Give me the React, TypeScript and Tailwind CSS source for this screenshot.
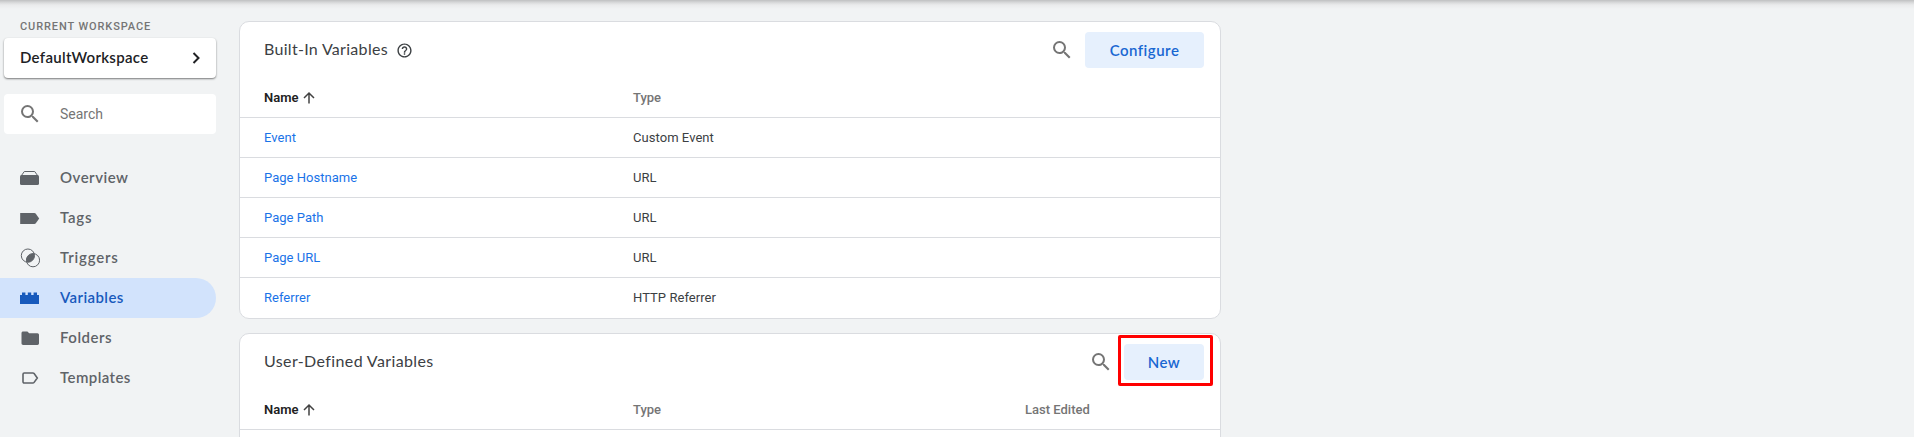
import type { ReactNode } from "react";

const HEADING = "font-['Lato','Open_Sans',sans-serif]";

function SearchIcon() {
  return (
    <svg viewBox="0 0 24 24" className="size-6 shrink-0 fill-[#757575]">
      <path d="M15.5 14h-.79l-.28-.27A6.47 6.47 0 0 0 16 9.5 6.5 6.5 0 1 0 9.5 16c1.61 0 3.09-.59 4.23-1.57l.27.28v.79l5 4.99L20.49 19l-4.99-5zm-6 0C7.01 14 5 11.99 5 9.5S7.01 5 9.5 5 14 7.01 14 9.5 11.99 14 9.5 14z" />
    </svg>
  );
}

type NavItem = { label: string; tracking: string; icon: ReactNode; active?: boolean };

const nav: NavItem[] = [
  {
    label: "Overview",
    tracking: "tracking-[0.5px]",
    icon: (
      <>
        <path d="M4.3 3.5h10.400l3 4.2H1.300z" fill="none" stroke="currentColor" strokeWidth="1" />
        <rect x="0" y="7" width="19" height="10" rx="1.6" />
      </>
    ),
  },
  {
    label: "Tags",
    tracking: "tracking-[0.75px]",
    icon: <path d="M.2 5h14.2c.6 0 1 .2 1.4.7l3.4 4.8-3.4 4.8c-.4.5-.8.7-1.4.7H.2z" />,
  },
  {
    label: "Triggers",
    tracking: "tracking-[0.8px]",
    icon: (
      <>
        <circle cx="7.9" cy="7.6" r="6.6" fill="none" stroke="currentColor" />
        <circle cx="13" cy="12.2" r="6.6" fill="none" stroke="currentColor" />
        <path d="M6.66 14.1A6.5 6.5 0 0 1 14.14 5.7A6.5 6.5 0 0 1 6.66 14.1z" />
      </>
    ),
  },
  {
    label: "Variables",
    tracking: "tracking-[0.4px]",
    active: true,
    icon: <path d="M0 16V7h2V4.5h3.4V7h2.4V4.5h3.4V7h2.4V4.500h3.400V7H19v9z" />,
  },
  {
    label: "Folders",
    tracking: "tracking-[0.5px]",
    icon: <path d="M3.2 3.400h4.200l1.800 1.800h8.200c1 0 1.600.800 1.600 1.700v8.400c0 1-.700 1.700-1.600 1.700H3.200c-1 0-1.700-.800-1.700-1.700V5.100c0-1 .700-1.700 1.700-1.700z" />,
  },
  {
    label: "Templates",
    tracking: "tracking-[0.42px]",
    icon: (
      <path
        d="M4.200 5h8.700c.5 0 .9.200 1.200.6l3.200 4.400-3.200 4.400c-.3.4-.7.6-1.200.6H4.200c-.7 0-1.200-.5-1.200-1.200V6.200c0-.7.500-1.200 1.200-1.200z"
        fill="none"
        stroke="currentColor"
        strokeWidth="1.6"
      />
    ),
  },
];

function Sidebar() {
  return (
    <aside className="flex w-[216px] shrink-0 flex-col pt-[19px]">
      <div className="pl-5 text-[11px] leading-4 font-medium tracking-[0.9px] text-[#757575]">CURRENT WORKSPACE</div>
      <button
        className={`mt-[3px] ml-1 flex h-10 items-center justify-between rounded bg-white pr-[11px] pl-4 text-[15px] font-semibold tracking-[0.31px] text-[#202124] shadow-[0_1px_2px_rgba(0,0,0,0.5)] ${HEADING}`}
      >
        <span className="pb-0.5">DefaultWorkspace</span>
        <svg viewBox="0 0 18 18" className="size-[18px] fill-none stroke-[#202124] stroke-2">
          <path d="m6.500 4 5 5-5 5" />
        </svg>
      </button>
      <div className="mt-4 ml-1 flex h-10 items-center rounded bg-white pl-[14px] text-sm text-[#757575]">
        <SearchIcon />
        <span className="pl-[18px]">Search</span>
      </div>
      <nav className="mt-6 flex flex-col">
        {nav.map((item) => (
          <a
            key={item.label}
            className={`flex h-10 items-center gap-5 rounded-r-full pl-5 text-[15px] font-semibold ${HEADING} ${
              item.active ? "bg-[#d2e3fc] text-[#185abc]" : "text-[#5f6368]"
            }`}
          >
            <svg viewBox="0 0 20 20" className="size-5 fill-current">
              {item.icon}
            </svg>
            <span className={`pb-px ${item.tracking}`}>{item.label}</span>
          </a>
        ))}
      </nav>
    </aside>
  );
}

function NameHeader() {
  return (
    <span className="flex items-center gap-[3px] font-semibold text-[#212121]">
      <span>Name</span>
      <svg viewBox="0 0 16 16" className="size-4 fill-none stroke-[#424242] stroke-[1.5]">
        <path d="M8 13.500V3.200M3 8l5-5 5 5" />
      </svg>
    </span>
  );
}

function ActionButton({ children, width }: { children: ReactNode; width: string }) {
  return (
    <button className={`h-9 rounded bg-[#e6f0fd] text-[15px] font-semibold tracking-[0.5px] text-[#1967d2] ${HEADING} ${width}`}>
      {children}
    </button>
  );
}

const GRID = "grid grid-cols-[369px_392px_1fr] items-center border-[#dadce0] pl-6 text-[13px]";

const rows = [
  ["Event", "Custom Event"],
  ["Page Hostname", "URL"],
  ["Page Path", "URL"],
  ["Page URL", "URL"],
  ["Referrer", "HTTP Referrer"],
];

export default function App() {
  return (
    <div className="flex h-[437px] w-full gap-[23px] overflow-hidden bg-[linear-gradient(to_bottom,#bfc0c1_0px,#c9cacb_1px,#dcddde_3px,#eaebec_5px,#f1f3f4_9px)] bg-[#f1f3f4] font-['Roboto',sans-serif]">
      <Sidebar />
      <main className="mt-[21px] flex w-[982px] shrink-0 flex-col gap-[14px]">
        <section className="h-[298px] shrink-0 overflow-hidden rounded-[10px] border border-[#dadce0] bg-white">
          <header className="flex h-14 items-center pr-4 pl-6">
            <h2 className={`pb-[3px] text-base tracking-[0.3px] text-[#3c4043] ${HEADING}`}>Built-In Variables</h2>
            <svg viewBox="0 0 24 24" className="ml-2 size-[17px] fill-[#3c4043]">
              <path d="M11 18h2v-2h-2v2zm1-16C6.480 2 2 6.480 2 12s4.480 10 10 10 10-4.480 10-10S17.520 2 12 2zm0 18c-4.410 0-8-3.590-8-8s3.590-8 8-8 8 3.590 8 8-3.590 8-8 8zm0-14c-2.210 0-4 1.790-4 4h2c0-1.100.9-2 2-2s2 .9 2 2c0 2-3 1.750-3 5h2c0-2.250 3-2.500 3-5 0-2.210-1.790-4-4-4z" />
            </svg>
            <div className="ml-auto flex items-center gap-[11px]">
              <SearchIcon />
              <ActionButton width="w-[119px]">Configure</ActionButton>
            </div>
          </header>
          <div className={`${GRID} h-10 border-b`}>
            <NameHeader />
            <span className="font-medium text-[#757575]">Type</span>
          </div>
          {rows.map(([name, type]) => (
            <div key={name} className={`${GRID} h-10 border-b last:border-b-0`}>
              <a className="tracking-[0.03px] text-[#1a73e8]">{name}</a>
              <span className="tracking-[0.05px] text-[#3c4043]">{type}</span>
            </div>
          ))}
        </section>
        <section className="relative h-[298px] shrink-0 rounded-[10px] border border-[#dadce0] bg-white">
          <header className="flex h-14 items-center pr-4 pl-6">
            <h2 className={`pb-[3px] text-base tracking-[0.38px] text-[#3c4043] ${HEADING}`}>User-Defined Variables</h2>
            <div className="ml-auto flex items-center gap-[11px]">
              <SearchIcon />
              <ActionButton width="w-20">New</ActionButton>
            </div>
          </header>
          <div className={`${GRID} h-10 border-b`}>
            <NameHeader />
            <span className="font-medium text-[#757575]">Type</span>
            <span className="font-medium text-[#757575]">Last Edited</span>
          </div>
          <div className="absolute top-[1px] right-[7px] h-[51px] w-[95px] rounded-xs border-3 border-[#ff0000]" />
        </section>
      </main>
    </div>
  );
}
